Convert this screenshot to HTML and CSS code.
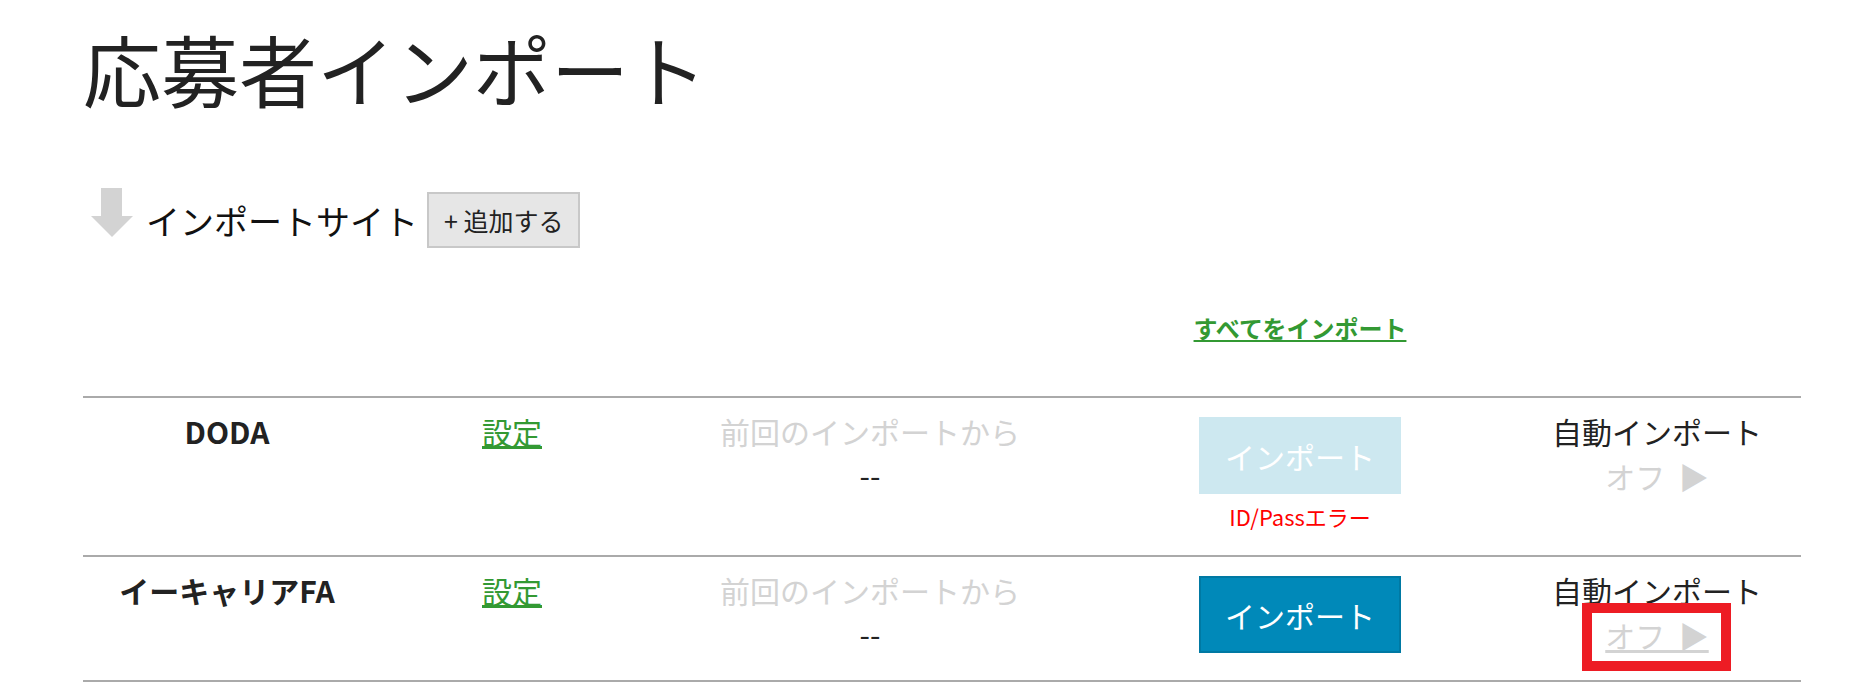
FILE: index.html
```html
<!DOCTYPE html>
<html lang="ja">
<head>
  <meta charset="UTF-8">
  <meta name="viewport" content="width=device-width, initial-scale=1.0">
  <title>応募者インポート</title>
  <link rel="stylesheet" href="styles.css">
</head>
<body>
  <div class="page">
    <h1 class="page-title">応募者インポート</h1>

    <div class="section-head">
      <svg class="arrow-icon" width="42" height="49" viewBox="0 0 42 49">
        <rect x="10" y="0" width="21" height="29" fill="#d3d3d3"/>
        <polygon points="0,28 42,28 21,49" fill="#d3d3d3"/>
      </svg>
      <span class="section-label">インポートサイト</span>
      <button class="add-btn">+ 追加する</button>
    </div>

    <div class="site-table">
      <div class="table-head">
        <div></div>
        <div></div>
        <div></div>
        <div class="cell"><a href="#" class="import-all">すべてをインポート</a></div>
        <div></div>
      </div>

      <!-- DODA -->
      <div class="site-row">
        <div class="cell site-name">DODA</div>
        <div class="cell"><a href="#" class="setting-link">設定</a></div>
        <div class="cell last-import">
          <span class="muted">前回のインポートから</span>
          <span>--</span>
        </div>
        <div class="cell">
          <button class="import-btn" disabled>インポート</button>
          <p class="error-text">ID/Passエラー</p>
        </div>
        <div class="cell auto-import">
          <span>自動インポート</span>
          <span class="toggle-off">オフ&nbsp; ▶</span>
        </div>
      </div>

      <!-- イーキャリアFA -->
      <div class="site-row">
        <div class="cell site-name">イーキャリアFA</div>
        <div class="cell"><a href="#" class="setting-link">設定</a></div>
        <div class="cell last-import">
          <span class="muted">前回のインポートから</span>
          <span>--</span>
        </div>
        <div class="cell">
          <button class="import-btn">インポート</button>
        </div>
        <div class="cell auto-import">
          <span>自動インポート</span>
          <a href="#" class="toggle-off is-marked">オフ&nbsp; ▶</a>
        </div>
      </div>
    </div>
  </div>
</body>
</html>
```

FILE: styles.css
```css
body {
  margin: 0;
  font-family: "Noto Sans CJK JP", "Noto Sans", sans-serif;
  color: #222;
  background-color: #fff;
}
.page {
  padding: 20px 49px 0 83px;
}
.page-title {
  margin: 0;
  font-size: 78px;
  font-weight: normal;
  line-height: 96px;
  color: #222;
}

/* インポートサイト 見出し */
.section-head {
  display: flex;
  align-items: center;
  margin-top: 76px;
  height: 56px;
}
.arrow-icon {
  margin-left: 8px;
  margin-bottom: 15px;
  display: block;
}
.section-label {
  margin-left: 13px;
  font-size: 34px;
  color: #111;
}
.add-btn {
  margin-left: 9px;
  height: 56px;
  padding: 0 15px;
  font-family: inherit;
  font-size: 25px;
  color: #222;
  background-color: #e6e6e6;
  border: 2px solid #c8c8c8;
  cursor: pointer;
}

/* テーブル */
.site-table {
  width: 100%;
}
.table-head,
.site-row {
  display: grid;
  grid-template-columns: 288fr 282fr 434fr 426fr 288fr;
  text-align: center;
}
.table-head {
  margin-top: 62px;
  padding-bottom: 50px;
}
.import-all {
  font-size: 24px;
  line-height: 36px;
  font-weight: bold;
  color: #339933;
}
.site-row {
  border-top: 2px solid #aaa;
  padding: 11px 0 22px;
  font-size: 30px;
  line-height: 45px;
}
.site-row:last-child {
  border-bottom: 2px solid #aaa;
}
.cell {
  display: flex;
  flex-direction: column;
  align-items: center;
}
.site-name {
  font-weight: bold;
}
.setting-link {
  color: #339933;
}
.muted {
  color: #d3d3d3;
}
.last-import span + span {
  line-height: 40px;
}
.import-btn {
  margin-top: 8px;
  width: 202px;
  height: 77px;
  font-family: inherit;
  font-size: 30px;
  color: #fff;
  background-color: #0089b9;
  border: 2px solid #0079a3;
  cursor: pointer;
}
.import-btn:disabled {
  background-color: #cde8f0;
  border-color: #cde8f0;
  cursor: default;
}
.error-text {
  margin: 6px 0 0;
  font-size: 22px;
  line-height: 33px;
  color: #ff0000;
}
.toggle-off {
  color: #d3d3d3;
}

/* 注目マーク（赤枠） */
.is-marked {
  position: relative;
}
.is-marked::after {
  content: "";
  position: absolute;
  top: -10px;
  bottom: -13px;
  left: -23px;
  right: -22px;
  border: 10px solid #ed1c24;
}
```
